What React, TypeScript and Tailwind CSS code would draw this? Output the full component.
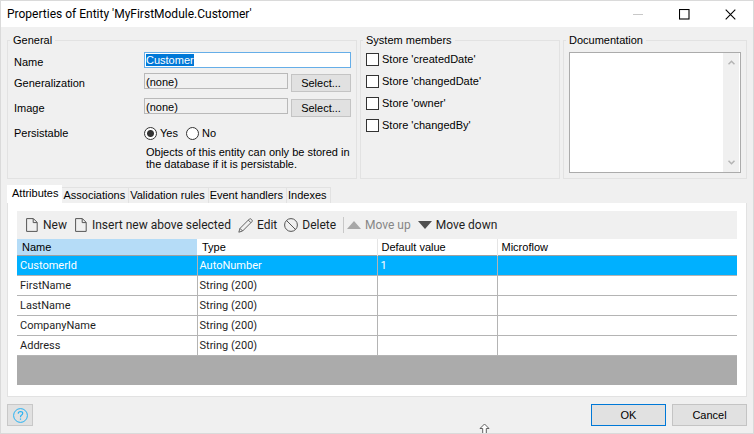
import { useEffect, useRef, useState } from "react";
import type { ReactNode } from "react";

type Attribute = { name: string; type: string; defaultValue: string; microflow: string };

const attributes: Attribute[] = [
  { name: "CustomerId", type: "AutoNumber", defaultValue: "1", microflow: "" },
  { name: "FirstName", type: "String (200)", defaultValue: "", microflow: "" },
  { name: "LastName", type: "String (200)", defaultValue: "", microflow: "" },
  { name: "CompanyName", type: "String (200)", defaultValue: "", microflow: "" },
  { name: "Address", type: "String (200)", defaultValue: "", microflow: "" },
];

const tabs = ["Attributes", "Associations", "Validation rules", "Event handlers", "Indexes"];
const systemMembers = ["createdDate", "changedDate", "owner", "changedBy"];

function TitleBar() {
  return (
    <header className="flex h-[26px] shrink-0 items-center justify-between bg-white pl-1.5">
      <h1 className="font-['Roboto','Noto_Sans',sans-serif] text-[12px] leading-4 text-black">
        Properties of Entity 'MyFirstModule.Customer'
      </h1>
      <div className="flex h-full items-center">
        <button type="button" aria-label="Minimize" disabled className="flex h-full w-[46px] items-center justify-center">
          <svg width="11" height="11" viewBox="0 0 11 11" className="stroke-[#c8c8c8]">
            <path d="M0 5.5H10" />
          </svg>
        </button>
        <button type="button" aria-label="Maximize" className="flex h-full w-[46px] items-center justify-center">
          <svg width="11" height="11" viewBox="0 0 11 11" fill="none" className="stroke-black">
            <rect x="0.5" y="0.5" width="9.5" height="9.5" strokeWidth="1.1" />
          </svg>
        </button>
        <button type="button" aria-label="Close" className="flex h-full w-[46px] items-center justify-center">
          <svg width="11" height="11" viewBox="0 0 11 11" className="stroke-black">
            <path d="M0.7 0.7L10.3 10.3M10.3 0.7L0.7 10.3" strokeWidth="1.1" />
          </svg>
        </button>
      </div>
    </header>
  );
}

function Group({ title, children }: { title: string; children: ReactNode }) {
  return (
    <fieldset className="min-w-0 border border-[#e2e2e2] px-[5px]">
      <legend className="-ml-[3px] px-[3px] leading-4">{title}</legend>
      {children}
    </fieldset>
  );
}

function PickerRow({ id, label }: { id: string; label: string }) {
  return (
    <div className="flex h-5 items-start">
      <label htmlFor={id} className="w-[130px] shrink-0 leading-5">{label}</label>
      <input
        id={id}
        readOnly
        defaultValue="(none)"
        className="h-4 w-0 min-w-0 flex-1 border border-[#b9b9b9] bg-[#f0f0f0] px-px pt-px leading-[13px] outline-none"
      />
      <button type="button" className="ml-[3px] mt-px h-[18px] w-[60px] border border-[#c4c4c4] bg-[#e1e1e1] leading-4">
        Select...
      </button>
    </div>
  );
}

function General() {
  const nameRef = useRef<HTMLInputElement>(null);
  const [persistable, setPersistable] = useState("Yes");
  useEffect(() => {
    nameRef.current?.focus();
    nameRef.current?.select();
  }, []);
  return (
    <Group title="General">
      <div className="flex flex-col gap-[5px] pb-2 pl-px pt-1">
        <div className="flex h-4 items-start">
          <label htmlFor="name" className="w-[130px] shrink-0 leading-5">Name</label>
          <input
            id="name"
            ref={nameRef}
            defaultValue="Customer"
            className="h-4 w-0 min-w-0 flex-1 border border-[#66aee8] bg-white px-px leading-[14px] outline-none selection:bg-[#0078d7] selection:text-white"
          />
        </div>
        <PickerRow id="generalization" label="Generalization" />
        <PickerRow id="image" label="Image" />
        <div>
          <div role="radiogroup" aria-labelledby="persistable-label" className="flex h-5 items-center">
            <span id="persistable-label" className="w-[130px] shrink-0">Persistable</span>
            {["Yes", "No"].map((option) => (
              <label key={option} className="mr-2 flex items-center gap-[3px]">
                <input
                  type="radio"
                  name="persistable"
                  value={option}
                  checked={persistable === option}
                  onChange={() => setPersistable(option)}
                  className="size-[13px] appearance-none rounded-full border border-[#333333] bg-white checked:bg-[radial-gradient(circle,#333333_0_3px,#ffffff_4px)]"
                />
                {option}
              </label>
            ))}
          </div>
          <p className="ml-[132px] mt-[3px] leading-3">
            Objects of this entity can only be stored in
            <br />
            the database if it is persistable.
          </p>
        </div>
      </div>
    </Group>
  );
}

function SystemMembers() {
  return (
    <Group title="System members">
      {systemMembers.map((member) => (
        <label key={member} className="flex h-[22px] items-center gap-[3px]">
          <input
            type="checkbox"
            className="size-[13px] appearance-none border border-[#333333] bg-white checked:bg-[#333333]"
          />
          Store '{member}'
        </label>
      ))}
    </Group>
  );
}

function Documentation() {
  return (
    <Group title="Documentation">
      <div className="mt-1 flex h-[121px] border border-[#ababab] bg-white">
        <textarea aria-label="Documentation" className="min-w-0 flex-1 resize-none px-px outline-none" />
        <div className="mr-px flex w-4 flex-col items-center justify-between bg-[#f0f0f0] py-[7px]">
          <svg width="7" height="5" viewBox="0 0 7 5" fill="none" className="stroke-[#b4b4b4]">
            <path d="M0.5 4.2L3.5 1.2L6.5 4.2" strokeWidth="1.5" />
          </svg>
          <svg width="7" height="5" viewBox="0 0 7 5" fill="none" className="stroke-[#b4b4b4]">
            <path d="M0.5 0.8L3.5 3.8L6.5 0.8" strokeWidth="1.5" />
          </svg>
        </div>
      </div>
    </Group>
  );
}

function PageIcon() {
  return (
    <svg width="14" height="14" viewBox="-1 0 14 14" fill="none" className="stroke-[#555555]">
      <path d="M0.6 0.6H7.4L11.2 4.4V13.4H0.6Z M7.2 0.8V4.6H11" />
    </svg>
  );
}

function PencilIcon() {
  return (
    <svg width="15" height="15" viewBox="0 0 15 15" fill="none" className="stroke-[#555555]" strokeLinejoin="round">
      <path d="M0.8 14.2L2 10.4L11.4 1Q12.2 0.3 13.2 1.2L13.8 1.8Q14.7 2.8 14 3.6L4.6 13Z M2 10.4L4.6 13 M10.3 2.1L12.9 4.7" strokeWidth="0.9" />
    </svg>
  );
}

function ForbiddenIcon() {
  return (
    <svg width="14" height="14" viewBox="0 0 14 14" fill="none" className="stroke-[#555555]">
      <circle cx="7" cy="7" r="6.4" />
      <path d="M2.5 2.5L11.5 11.5" />
    </svg>
  );
}

function Triangle({ up }: { up?: boolean }) {
  return (
    <svg width="14" height="8" viewBox="0 0 14 8" className={up ? "fill-[#a8a8a8]" : "fill-[#505050]"}>
      <path d={up ? "M7 0L14 8H0Z" : "M0 0H14L7 8Z"} />
    </svg>
  );
}

function Tool({ icon, label, disabled }: { icon: ReactNode; label: string; disabled?: boolean }) {
  return (
    <button type="button" disabled={disabled} className="flex items-center gap-1 whitespace-nowrap text-[#1e1e1e] disabled:text-[#868686]">
      {icon}
      {label}
    </button>
  );
}

function AttributesTable() {
  return (
    <table className="w-full table-fixed border-collapse text-left">
      <colgroup>
        <col className="w-1/4" />
        <col className="w-1/4" />
        <col className="w-1/6" />
        <col className="w-1/3" />
      </colgroup>
      <thead>
        <tr className="h-4 border-b border-[#a0a0a0] bg-white leading-[14px]">
          <th className="bg-[#b5dcf7] px-[5px] font-normal">Name</th>
          <th className="px-[5px] font-normal">Type</th>
          <th className="border-l border-[#e5e5e5] px-1 font-normal">Default value</th>
          <th className="border-l border-[#e5e5e5] px-1 font-normal">Microflow</th>
        </tr>
      </thead>
      <tbody className="font-['Roboto','Noto_Sans',sans-serif]">
        {attributes.map((a, i) => (
          <tr
            key={a.name}
            className={
              i === 0
                ? "h-5 border-b border-[#b4b4b4] bg-[#00b0ff] leading-4 text-white"
                : "h-5 border-b border-[#b4b4b4] bg-white leading-4 text-[#1e1e1e]"
            }
          >
            <td className="px-[3px] pt-0.5">{a.name}</td>
            <td className="border-l border-[#b4b4b4] px-[2px] pt-0.5">{a.type}</td>
            <td className="border-l border-[#b4b4b4] px-[3px] pt-0.5">{a.defaultValue}</td>
            <td className="border-l border-[#b4b4b4] px-[3px] pt-0.5">{a.microflow}</td>
          </tr>
        ))}
      </tbody>
    </table>
  );
}

function EntityTabs() {
  return (
    <section className="mt-1.5 flex flex-1 flex-col">
      <div role="tablist" className="flex h-[18px] items-end">
        {tabs.map((tab, i) => (
          <button
            key={tab}
            type="button"
            role="tab"
            aria-selected={i === 0}
            className={
              i === 0
                ? "h-[18px] bg-white pb-0.5 pl-[5px] pr-1 leading-4"
                : "h-4 border-r border-t border-[#e2e2e2] pl-px pr-[3px] leading-[15px]"
            }
          >
            {tab}
          </button>
        ))}
      </div>
      <div role="tabpanel" className="flex flex-1 flex-col border border-t-0 border-[#e2e2e2] bg-white px-[9px] pb-[11px] pt-2">
        <div className="flex h-7 items-center gap-[7px] bg-[#f0f0f0] pl-2 font-['Roboto','Noto_Sans',sans-serif] text-[12px]">
          <Tool icon={<PageIcon />} label="New" />
          <Tool icon={<PageIcon />} label="Insert new above selected" />
          <Tool icon={<PencilIcon />} label="Edit" />
          <Tool icon={<ForbiddenIcon />} label="Delete" />
          <div className="flex items-center gap-[3px]">
            <span className="h-4 w-px bg-[#c8c8c8]" />
            <Tool icon={<Triangle up />} label="Move up" disabled />
          </div>
          <Tool icon={<Triangle />} label="Move down" />
        </div>
        <div className="flex-1 bg-[#ababab]">
          <AttributesTable />
        </div>
      </div>
    </section>
  );
}

export default function App() {
  return (
    <div className="relative flex min-h-screen flex-col overflow-hidden border border-[#dadada] bg-[#f0f0f0] font-['Liberation_Sans',Arial,sans-serif] text-[11px] text-black">
      <TitleBar />
      <main className="flex flex-1 flex-col px-1.5 pt-[5px]">
        <div className="grid grid-cols-[350fr_200fr_184fr] gap-[3px]">
          <General />
          <SystemMembers />
          <Documentation />
        </div>
        <EntityTabs />
      </main>
      <footer className="flex h-9 shrink-0 items-center gap-1.5 px-1.5">
        <button type="button" aria-label="Help" className="mr-auto flex h-[22px] w-[26px] items-center justify-center border border-[#c8c8c8] bg-[#e1e1e1]">
          <svg width="15" height="15" viewBox="0 0 15 15" fill="none" className="stroke-[#27b2f2]">
            <circle cx="7.5" cy="7.5" r="6.9" />
            <path d="M5.2 5.6Q5.3 3.5 7.5 3.5Q9.8 3.6 9.7 5.5Q9.6 6.5 8.3 7.3Q7.5 7.9 7.5 9.3M7.5 10.4V11.7" strokeWidth="1.2" />
          </svg>
        </button>
        <button type="button" className="h-[22px] w-[75px] border border-[#0078d7] bg-[#e1e1e1]">OK</button>
        <button type="button" className="h-[22px] w-[75px] border border-[#c4c4c4] bg-[#e1e1e1]">Cancel</button>
      </footer>
      <svg width="11" height="10" viewBox="0 0 11 10" className="absolute bottom-0 left-[478px] fill-white stroke-[#606060]">
        <path d="M5.5 1L10 5.5H7.3V11H3.7V5.5H1Z" />
      </svg>
    </div>
  );
}
